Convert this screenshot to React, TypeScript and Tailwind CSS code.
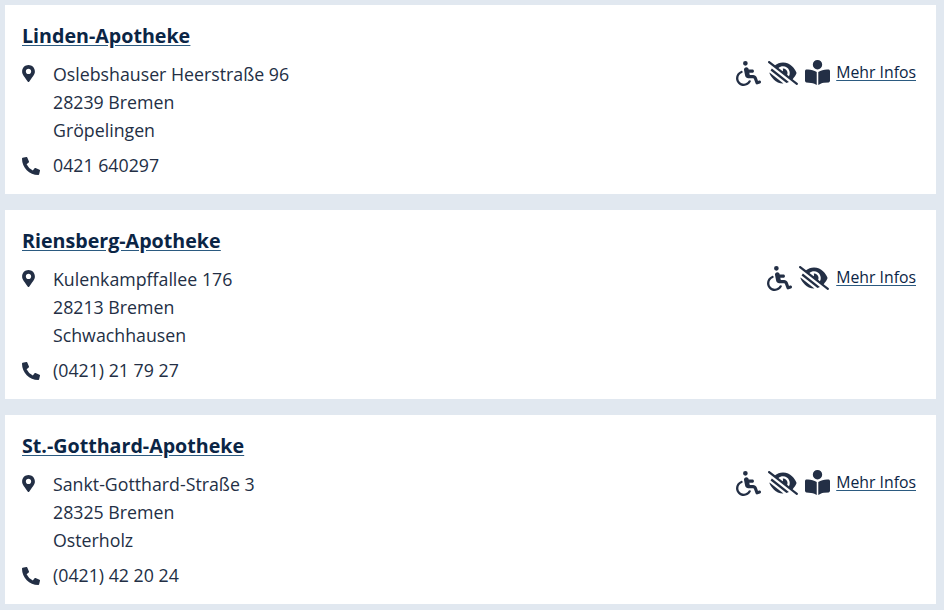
import { FaMapMarkerAlt, FaPhoneAlt } from 'react-icons/fa';
import { FaBookOpenReader, FaEyeLowVision, FaWheelchair } from 'react-icons/fa6';

interface Pharmacy {
  name: string;
  street: string;
  city: string;
  district: string;
  phone: string;
  books: boolean;
}

const pharmacies: Pharmacy[] = [
  { name: 'Linden-Apotheke', street: 'Oslebshauser Heerstraße 96', city: '28239 Bremen', district: 'Gröpelingen', phone: '0421 640297', books: true },
  { name: 'Riensberg-Apotheke', street: 'Kulenkampffallee 176', city: '28213 Bremen', district: 'Schwachhausen', phone: '(0421) 21 79 27', books: false },
  { name: 'St.-Gotthard-Apotheke', street: 'Sankt-Gotthard-Straße 3', city: '28325 Bremen', district: 'Osterholz', phone: '(0421) 42 20 24', books: true },
];

const PharmacyCard = ({ pharmacy }: { pharmacy: Pharmacy }) => (
  <div className="flex h-[189px] justify-between bg-white pl-[17px] pr-5 pt-[15px]">
    <div>
      <h2 className="text-[19.65px] leading-[31px] font-bold text-[#0b2545] underline decoration-[#2b5a80] underline-offset-2">
        <a href="#">{pharmacy.name}</a>
      </h2>
      <div className="mt-[10px] flex text-[#232f45]">
        <FaMapMarkerAlt className="mt-[4px] w-[31px] pr-[18px] shrink-0" size={17} />
        <div className="text-[17.75px]">
          <div className="leading-[27px]">{pharmacy.street}</div>
          <div className="leading-[28px]">{pharmacy.city}</div>
          <div className="leading-[28px]">{pharmacy.district}</div>
        </div>
      </div>
      <div className="mt-[8px] flex items-center text-[#232f45]">
        <FaPhoneAlt className="w-[31px] pr-[13px] shrink-0" size={18} />
        <span className="text-[17.75px] leading-[27.5px]">{pharmacy.phone}</span>
      </div>
    </div>
    <div className="mt-[38px] flex h-[30px] items-center text-[#232f45]">
      <FaWheelchair size={25} className="ml-[1px]" />
      <FaEyeLowVision size={30} className="ml-[7px]" />
      {pharmacy.books && <FaBookOpenReader size={25} className="ml-[7px] -mr-[1px] -mt-[2px]" />}
      <a href="#" className="ml-[7px] text-[15.8px] text-[#0b2545] underline decoration-[#2b5a80] underline-offset-2">
        Mehr Infos
      </a>
    </div>
  </div>
);

export default function App() {
  return (
    <div className="flex min-h-[610px] flex-col gap-[16px] bg-[#e1e8f0] px-[5px] py-[5px] pr-[8px] font-['Open_Sans',sans-serif]">
      {pharmacies.map((pharmacy) => (
        <PharmacyCard key={pharmacy.name} pharmacy={pharmacy} />
      ))}
    </div>
  );
}
